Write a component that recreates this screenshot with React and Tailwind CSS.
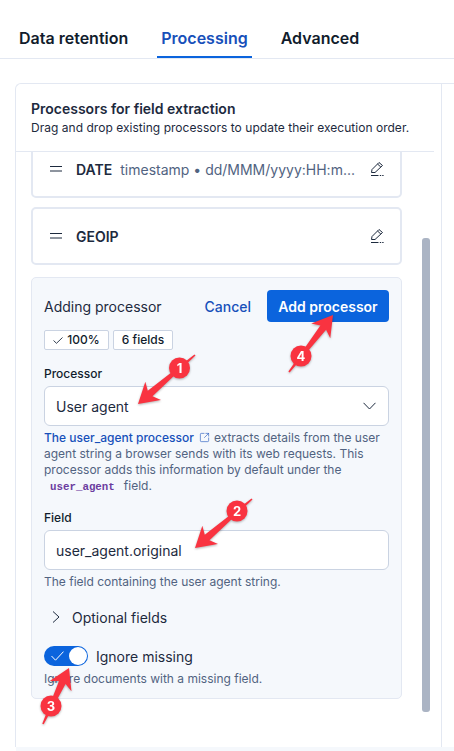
import React from 'react';
import { SquareArrowOutUpRight } from 'lucide-react';

// tip, badge centre and tail of each red annotation
const arrows = [
  { n: 1, tip: [138, 404], badge: [179.5, 368], tail: [195, 355] },
  { n: 2, tip: [195, 548], badge: [237, 511], tail: [252, 499] },
  { n: 3, tip: [69, 668], badge: [51, 706], tail: [43, 724] },
  { n: 4, tip: [333, 315], badge: [301, 356], tail: [289, 372] },
];

const arrowPoints = ({ tip, tail }) => {
  const dx = tail[0] - tip[0];
  const dy = tail[1] - tip[1];
  const len = Math.hypot(dx, dy);
  const ux = dx / len;
  const uy = dy / len;
  const px = -uy;
  const py = ux;
  const at = (along, side) => `${tip[0] + ux * along + px * side},${tip[1] + uy * along + py * side}`;
  return [at(0, 0), at(20, 12), at(16, 3.6), at(len, 0.8), at(len, -0.8), at(16, -3.6), at(20, -12)].join(' ');
};

const Annotations = () => (
  <svg className="absolute top-0 left-0 w-[454px] h-[751px] pointer-events-none" viewBox="0 0 454 751">
    {arrows.map((a) => (
      <g key={a.n} style={{ filter: 'drop-shadow(0 1px 1px rgba(0,0,0,0.3))' }}>
        <polygon points={arrowPoints(a)} fill="#f93340" />
        <circle cx={a.badge[0]} cy={a.badge[1]} r="10.5" fill="#f93340" />
        <text x={a.badge[0]} y={a.badge[1] + 4.5} textAnchor="middle" fill="#fff" fontSize="13" fontWeight="700" fontFamily="Inter, sans-serif">
          {a.n}
        </text>
      </g>
    ))}
  </svg>
);

const DragIcon = () => (
  <svg className="w-3 h-3 shrink-0" viewBox="0 0 12 12" fill="none" stroke="#1d2a3e" strokeWidth="1">
    <path d="M0 3.5h12M0 8h12" />
  </svg>
);

const PencilIcon = () => (
  <svg className="ml-auto w-[14px] h-4 shrink-0" viewBox="0 0 14 16" fill="none" stroke="#1d2a3e" strokeWidth="1">
    <path d="M1.5 11.5 2 8.5 9 1.5 12.5 4.5 5 11.5Z" />
    <path d="M7.5 3 10.8 6" />
    <path d="M1 14.5h7.5M9.8 14.5h1.4M12.2 14.5h1.4" />
  </svg>
);

const ProcessorCard = ({ name, detail }) => (
  <div className="h-[58px] shrink-0 border-2 border-[#e3e8f2] rounded-[5px] bg-white flex items-center pl-[17px] pr-[16px]">
    <DragIcon />
    <span className="ml-[14px] text-[14px] font-semibold text-[#1d2a3e]">{name}</span>
    {detail && <span className="ml-2 text-[14px] text-[#516381] truncate">{detail}</span>}
    <PencilIcon />
  </div>
);

export default function App() {
  return (
    <div className="relative w-[454px] h-[751px] overflow-hidden bg-white font-['Inter',sans-serif] text-[#1d2a3e]">
      <div className="h-[59px] border-b border-[#e3e8f2] flex items-end pl-[15px] gap-[25px]">
        <div className="h-[32px] px-1 text-[16px] leading-[24px] font-semibold text-[#111c2c]">Data retention</div>
        <div className="h-[32px] px-1 text-[16px] leading-[24px] font-semibold text-[#1750ba] border-b-[2px] border-[#0b64dd]">Processing</div>
        <div className="h-[32px] px-1 text-[16px] leading-[24px] font-semibold text-[#111c2c]">Advanced</div>
      </div>

      <div className="mt-6 ml-[15px] w-[439px] h-[664px] border-l border-t border-[#e3e8f2] rounded-tl-[6px]">
        <div className="w-[426px] h-full border-r border-[#e3e8f2] flex flex-col">
          <div className="h-[68px] w-[418px] shrink-0 border-b border-[#e3e8f2] pl-[15px] pt-[16px]">
            <h2 className="text-[14px] leading-[18px] font-semibold text-[#1d2a3e]">Processors for field extraction</h2>
            <p className="mt-px text-[12px] leading-[18px] tracking-[0.03px] text-[#1d2a3e]">Drag and drop existing processors to update their execution order.</p>
          </div>

          <div className="relative flex-1 overflow-hidden pl-[15px]">
            <div className="w-[371px] -mt-[12px] flex flex-col gap-[9px]">
              <ProcessorCard name="DATE" detail="timestamp • dd/MMM/yyyy:HH:m..." />
              <ProcessorCard name="GEOIP" />
              <div className="mt-[3px] h-[422px] border border-[#e3e8f2] rounded-[5px] bg-[#f5f8fc] px-[12px] pt-[12px]">
                <div className="flex items-center h-8">
                  <span className="text-[14px] text-[#1d2a3e]">Adding processor</span>
                  <span className="ml-auto text-[14px] font-medium text-[#1750ba]">Cancel</span>
                  <button className="ml-4 w-[122px] h-8 rounded-[4px] bg-[#0b64dd] text-white text-[14px] font-semibold">Add processor</button>
                </div>
                <div className="mt-[8px] flex gap-1">
                  <span className="h-5 w-[65px] border border-[#cad3e2] rounded-[2px] bg-white flex items-center justify-center gap-1 text-[12px] font-medium text-[#111c2c]">
                    <svg className="w-[10px] h-[7px]" viewBox="0 0 10 7" fill="none" stroke="#1d2a3e" strokeWidth="0.9">
                      <path d="M0.5 3.5 3.5 6.3 9.5 0.5" />
                    </svg>
                    100%
                  </span>
                  <span className="h-5 w-[60px] border border-[#cad3e2] rounded-[2px] bg-white flex items-center justify-center text-[12px] font-medium text-[#111c2c]">6 fields</span>
                </div>
                <label className="block mt-[16px] text-[12px] leading-4 font-medium text-[#111c2c]">Processor</label>
                <div className="mt-[4px] h-10 border border-[#cad3e2] rounded-[6px] bg-white flex items-center pl-[11px] pr-3 text-[14px] text-[#1d2a3e]">
                  User agent
                  <svg className="ml-auto w-[13px] h-2" viewBox="0 0 13 8" fill="none" stroke="#1d2a3e" strokeWidth="1">
                    <path d="M0.5 0.8 6.5 7 12.5 0.8" />
                  </svg>
                </div>
                <p className="mt-[4px] text-[12px] leading-4 text-[#516381]">
                  <span className="font-medium text-[#1750ba]">The user_agent processor</span>
                  <SquareArrowOutUpRight className="inline w-[11px] h-[11px] ml-[5px] mr-1 text-[#1750ba] align-[-1px]" strokeWidth={1.3} />
                  extracts details from the user agent string a browser sends with its web requests. This processor adds this information by default under the
                  <br />
                  <code className="ml-[6px] mr-[9px] font-['Liberation_Mono',monospace] text-[10.8px] font-bold text-[#6b3c9f]">user_agent</code>
                  field.
                </p>
                <label className="block mt-[15px] text-[12px] leading-4 font-medium text-[#111c2c]">Field</label>
                <div className="mt-[4px] h-10 border border-[#cad3e2] rounded-[6px] bg-white flex items-center pl-[11px] text-[14px] text-[#1d2a3e]">user_agent.original</div>
                <p className="mt-[4px] text-[12px] leading-4 text-[#516381]">The field containing the user agent string.</p>
                <div className="mt-[19px] flex items-center h-4 pl-[8px] text-[14px] text-[#1d2a3e]">
                  <svg className="w-2 h-3" viewBox="0 0 8 12" fill="none" stroke="#1d2a3e" strokeWidth="1">
                    <path d="M1 0.5 7 6 1 11.5" />
                  </svg>
                  <span className="ml-[12px]">Optional fields</span>
                </div>
                <div className="mt-[21px] flex items-center h-5">
                  <div className="w-[44px] h-5 rounded-full bg-[#0b64dd] flex items-center justify-between pl-[7px] pr-px">
                    <svg className="w-[13px] h-[10px]" viewBox="0 0 13 10" fill="none" stroke="#fff" strokeWidth="1">
                      <path d="M0.5 5 4.5 9.2 12.5 0.6" />
                    </svg>
                    <div className="w-[18px] h-[18px] rounded-full bg-white" />
                  </div>
                  <span className="ml-2 text-[14px] text-[#1d2a3e]">Ignore missing</span>
                </div>
                <p className="mt-[5px] text-[12px] leading-4 text-[#516381]">Ignore documents with a missing field.</p>
              </div>
            </div>
            <div className="absolute left-[406px] top-[86px] w-2 h-[474px] rounded-[3px] bg-[#abb4c4]" />
          </div>
        </div>
      </div>
      <div className="absolute left-[16px] top-[747px] w-[438px] h-1 bg-[#f5f8fc]" />
      <Annotations />
    </div>
  );
}
